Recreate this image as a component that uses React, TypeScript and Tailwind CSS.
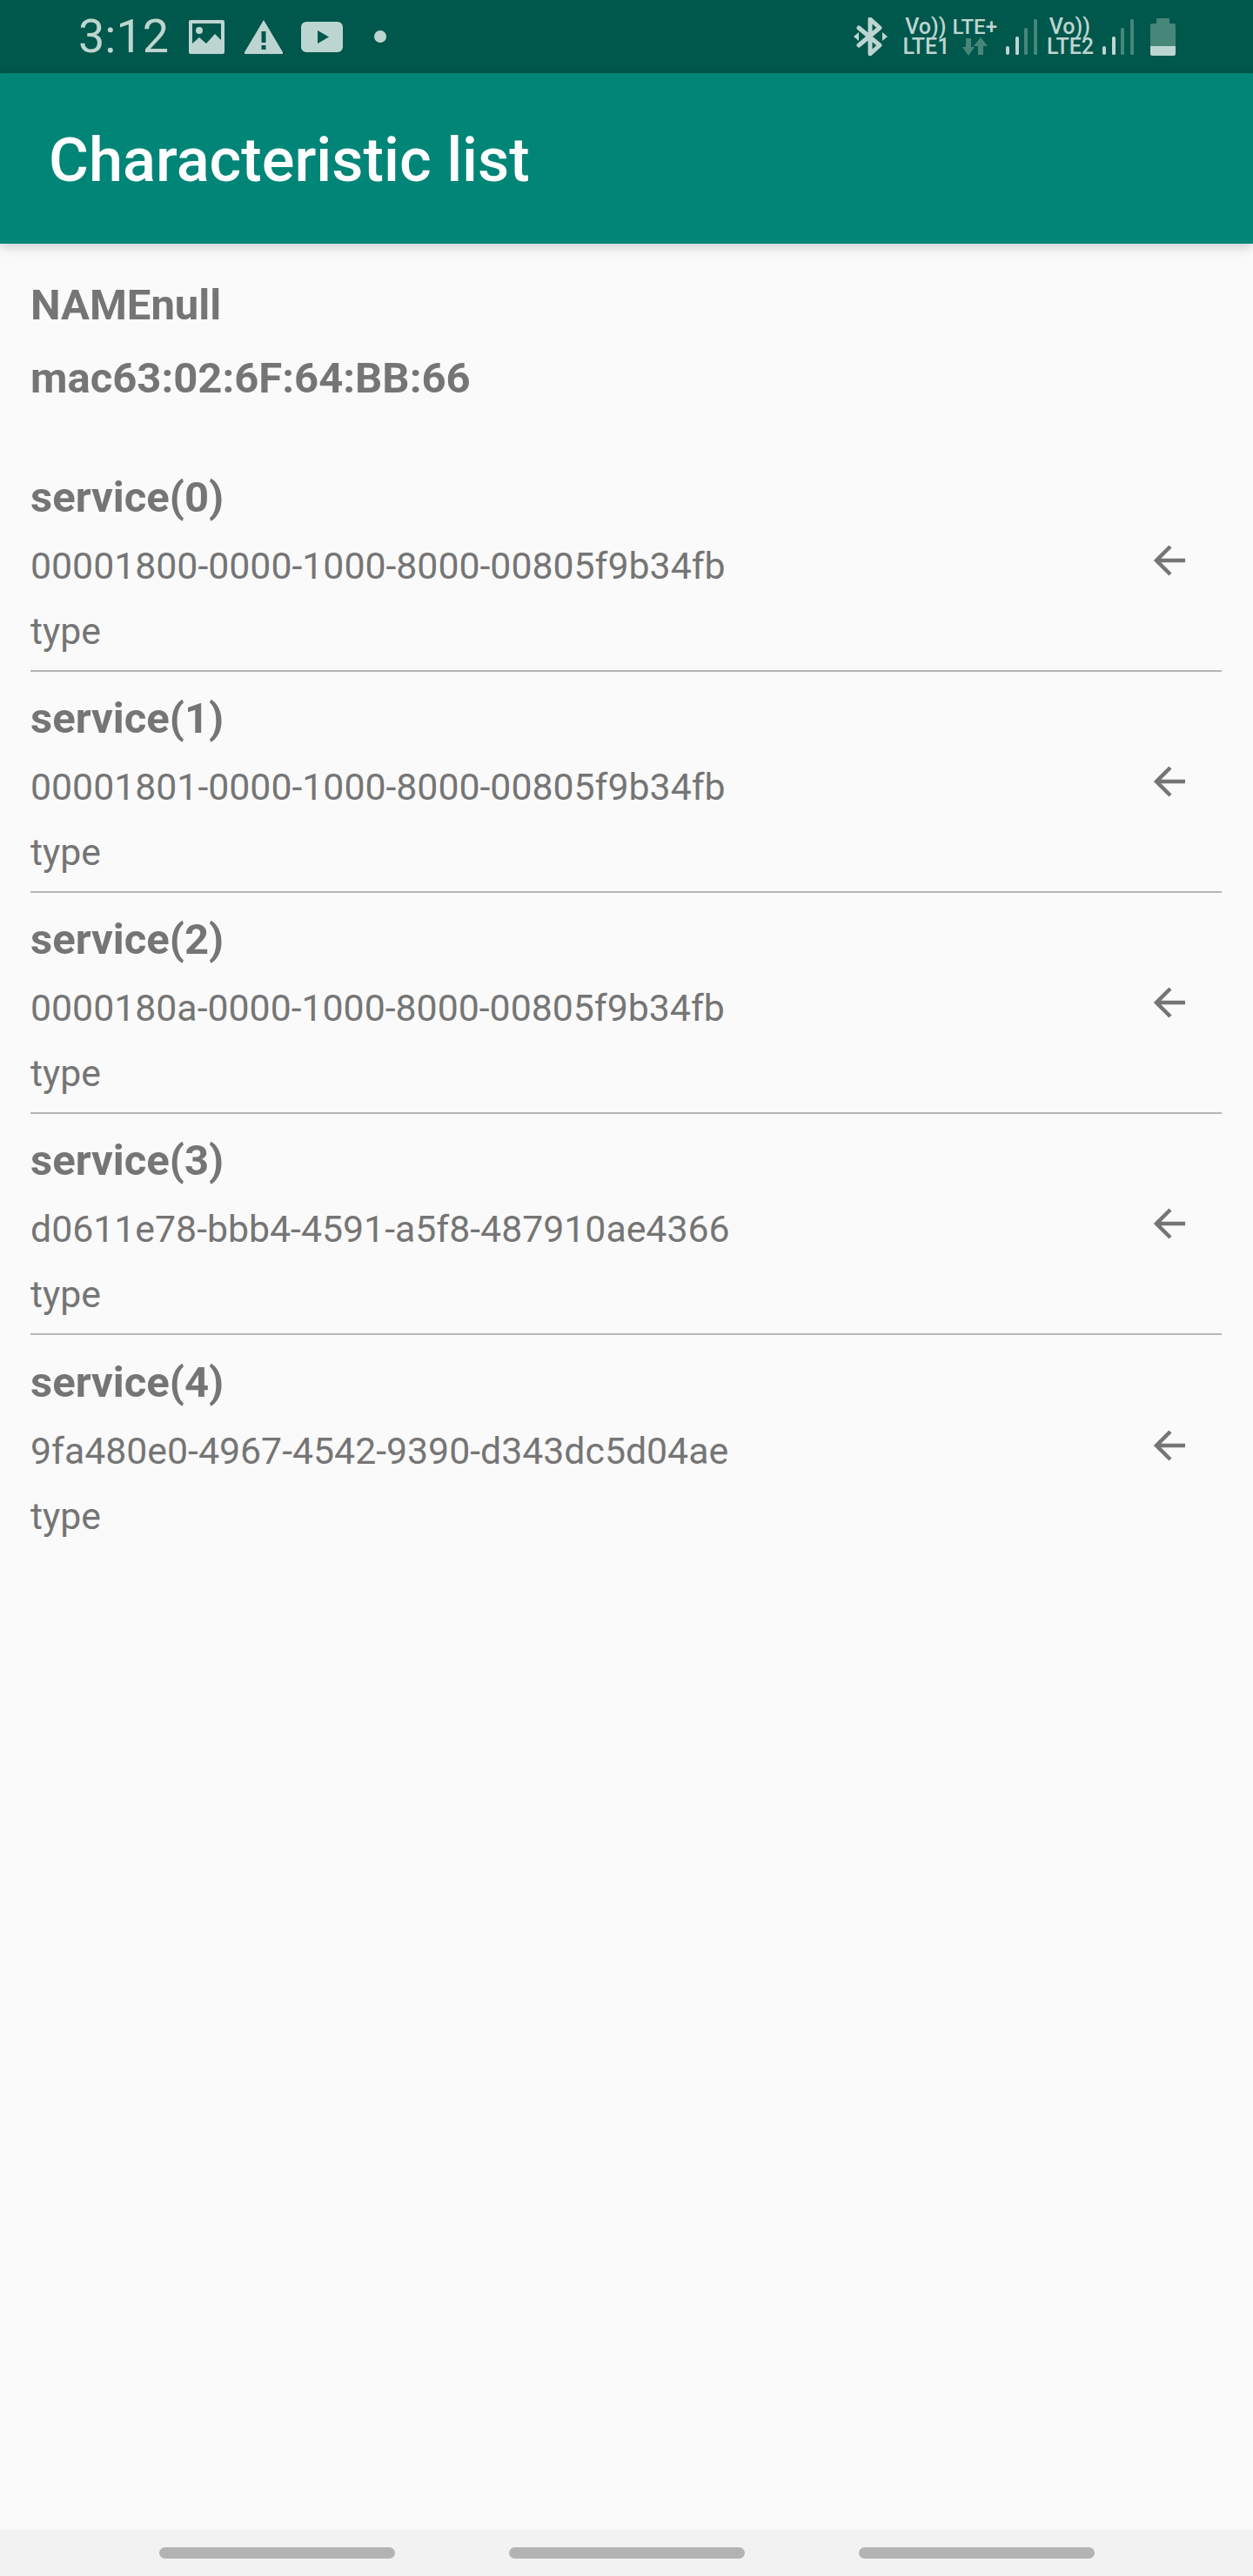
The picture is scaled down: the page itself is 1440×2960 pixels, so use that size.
import React from 'react'

const services = [
  '00001800-0000-1000-8000-00805f9b34fb',
  '00001801-0000-1000-8000-00805f9b34fb',
  '0000180a-0000-1000-8000-00805f9b34fb',
  'd0611e78-bbb4-4591-a5f8-487910ae4366',
  '9fa480e0-4967-4542-9390-d343dc5d04ae'
]

const TINT = '#bdd5d0'
const DIM = '#46877a'

function ImageIcon() {
  return (
    <svg width="41" height="39" viewBox="0 0 41 39">
      <path
        fillRule="evenodd"
        fill={TINT}
        d="M2 0h37a2 2 0 0 1 2 2v35a2 2 0 0 1-2 2H2a2 2 0 0 1-2-2V2a2 2 0 0 1 2-2zM4 4v23l8-7 8 7 10-11 7 7V4z"
      />
      <circle cx="12" cy="12" r="4" fill={TINT} />
    </svg>
  )
}

function WarningIcon() {
  return (
    <svg width="44" height="39" viewBox="0 0 44 39">
      <path
        fillRule="evenodd"
        fill={TINT}
        d="M22 0l22 37a1.300 1.300 0 0 1-1 2H1a1.300 1.300 0 0 1-1-2zM19.500 13v13h5V13zM19.500 29v5h5v-5z"
      />
    </svg>
  )
}

function YoutubeIcon() {
  return (
    <svg width="48" height="35" viewBox="0 0 48 35">
      <path
        fillRule="evenodd"
        fill={TINT}
        d="M6 0h36a6 6 0 0 1 6 6v23a6 6 0 0 1-6 6H6a6 6 0 0 1-6-6V6a6 6 0 0 1 6-6zM19 10v15l13-7.500z"
      />
    </svg>
  )
}

function BluetoothIcon() {
  return (
    <svg width="39" height="44" viewBox="0 0 39 44">
      <path
        d="M6 12l24 20-11 10V2l11 10L6 32"
        fill="none"
        stroke={TINT}
        strokeWidth="5"
        strokeLinejoin="round"
        strokeLinecap="round"
      />
      <path d="M0 22l6-5v10zM39 22l-6-5v10z" fill={TINT} />
    </svg>
  )
}

function DataArrows() {
  return (
    <svg width="30" height="21" viewBox="0 0 30 21">
      <path d="M5 1h6v10h4l-7 10-7-10h4z" fill={DIM} />
      <path d="M19 20h6V10h5L22 0l-8 10h5z" fill={DIM} />
    </svg>
  )
}

function SignalIcon() {
  return (
    <svg width="36" height="41" viewBox="0 0 36 41">
      <rect x="0" y="31" width="4" height="10" rx="2" fill={TINT} />
      <rect x="11" y="20" width="4" height="21" rx="1.500" fill={TINT} />
      <rect x="21" y="10" width="4" height="31" rx="1.500" fill={DIM} />
      <rect x="32" y="0" width="4" height="41" rx="1.500" fill={DIM} />
    </svg>
  )
}

function BatteryIcon() {
  return (
    <svg width="29" height="43" viewBox="0 0 29 43">
      <path d="M8 0h13a1 1 0 0 1 1 1v5h5a2 2 0 0 1 2 2v24H0V8a2 2 0 0 1 2-2h5V1a1 1 0 0 1 1-1z" fill={DIM} />
      <path d="M0 32h29v9a2 2 0 0 1-2 2H2a2 2 0 0 1-2-2z" fill={TINT} />
    </svg>
  )
}

function Volte({ label }: { label: string }) {
  return (
    <div className="flex flex-col items-end text-[25px] leading-[23px] font-medium text-[#bdd5d0]">
      <span className="pr-[4px]">Vo))</span>
      <span>{label}</span>
    </div>
  )
}

function StatusBar() {
  return (
    <div className="flex h-[84px] items-center justify-between bg-[#00574b] pl-[90px] pr-[89px]">
      <div className="flex items-center">
        <span className="text-[54px] leading-none text-[#bdd5d0]">3:12</span>
        <div className="ml-[23px] flex items-center gap-[23px]">
          <ImageIcon />
          <WarningIcon />
        </div>
        <div className="ml-[21px]">
          <YoutubeIcon />
        </div>
        <div className="ml-[36px] h-[14px] w-[14px] rounded-full bg-[#bdd5d0]" />
      </div>
      <div className="flex items-center">
        <BluetoothIcon />
        <div className="ml-[17px]">
          <Volte label="LTE1" />
        </div>
        <div className="ml-[3px] flex flex-col items-center text-[24px] leading-[23px] font-medium text-[#bdd5d0]">
          <span>LTE+</span>
          <DataArrows />
        </div>
        <div className="ml-[10px]">
          <SignalIcon />
        </div>
        <div className="ml-[11px]">
          <Volte label="LTE2" />
        </div>
        <div className="ml-[10px]">
          <SignalIcon />
        </div>
        <div className="ml-[19px]">
          <BatteryIcon />
        </div>
      </div>
    </div>
  )
}

function ServiceRow({ index, uuid, last }: { index: number; uuid: string; last: boolean }) {
  return (
    <div
      className={`flex h-[254px] items-center justify-between pt-[8px] pr-[6px] ${
        last ? '' : 'border-b-2 border-[#b5b5b5]'
      }`}
    >
      <div className="flex flex-col">
        <span className="text-[49px] leading-[60px] font-bold">service({index})</span>
        <span className="mt-[18px] text-[42.8px] leading-[60px]">{uuid}</span>
        <span className="mt-[15px] text-[42.8px] leading-[60px]">type</span>
      </div>
      <svg width="36" height="36" viewBox="0 0 36 36" className="mr-[36px] mb-[8px]">
        <path d="M19 2L3 18l16 16M4 18h32" fill="none" stroke="#757575" strokeWidth="4.500" />
      </svg>
    </div>
  )
}

export default function App() {
  return (
    <div
      className="flex h-[2960px] w-[1440px] flex-col bg-[#fafafa] text-[#757575]"
      style={{ fontFamily: 'Roboto, sans-serif' }}
    >
      <StatusBar />
      <div className="flex h-[196px] items-center bg-[#008577] px-[56px] pt-[6px] shadow-[0_4px_12px_rgba(0,0,0,0.18)]">
        <span className="text-[70.4px] font-medium text-white">Characteristic list</span>
      </div>
      <div className="flex flex-1 flex-col pl-[35px] pr-[36px]">
        <div className="mt-[41px] text-[49px] leading-[60px] font-bold">NAMEnull</div>
        <div className="mt-[24px] text-[49px] leading-[60px] font-bold">mac63:02:6F:64:BB:66</div>
        <div className="mt-[53px]">
          {services.map((uuid, i) => (
            <ServiceRow key={i} index={i} uuid={uuid} last={i === services.length - 1} />
          ))}
        </div>
      </div>
      <div className="flex h-[53px] items-start justify-center gap-[131px] bg-[#f2f2f2] pt-[20px]">
        <div className="h-[13px] w-[271px] rounded-full bg-[#b3b3b3]" />
        <div className="h-[13px] w-[271px] rounded-full bg-[#b3b3b3]" />
        <div className="h-[13px] w-[271px] rounded-full bg-[#b3b3b3]" />
      </div>
    </div>
  )
}
